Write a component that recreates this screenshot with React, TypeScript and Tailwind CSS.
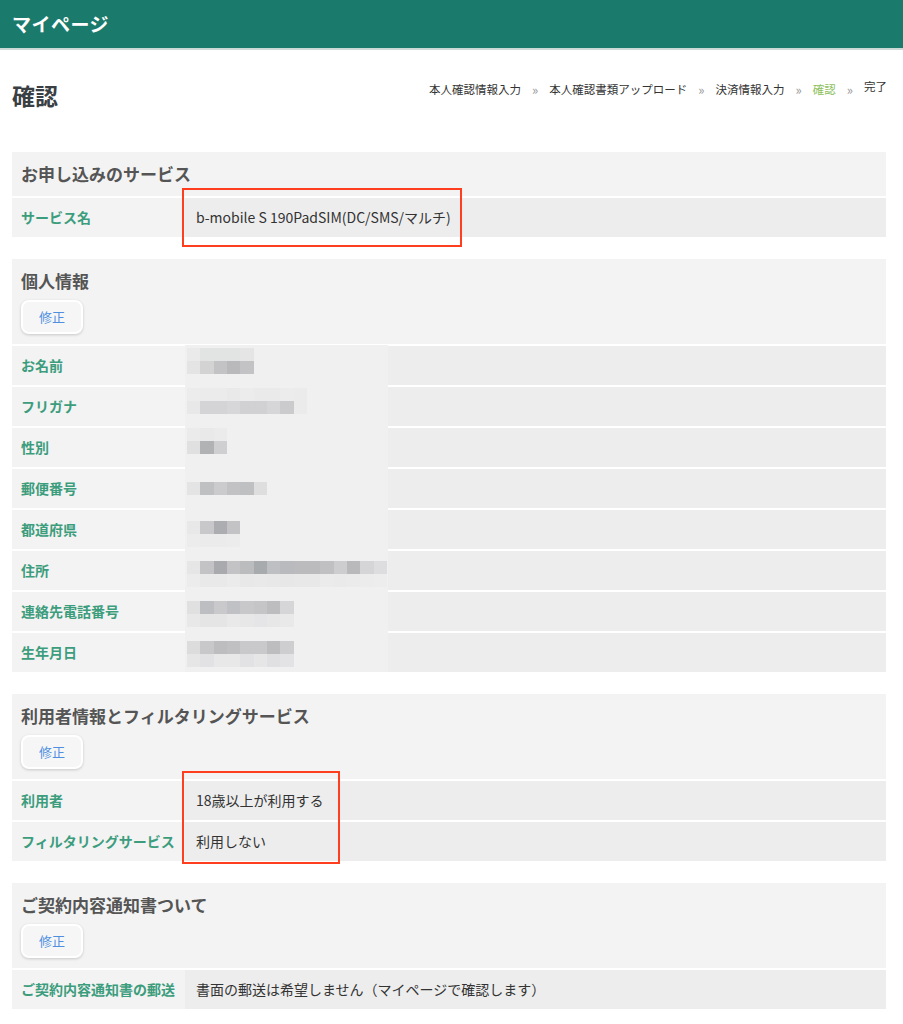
import React from "react";

const FONT = { fontFamily: '"Noto Sans CJK JP", "Noto Sans", sans-serif' };

type Row = { label: string; value?: React.ReactNode };

function FixButton() {
  return (
    <button className="mt-[7px] h-[34px] w-[62px] rounded-[8px] border-2 border-white bg-[#f6f6f6] text-[13px] text-[#4f8fe0] shadow-[0_1px_3px_rgba(0,0,0,0.18)] flex items-center justify-center">
      修正
    </button>
  );
}

function Rows({ rows }: { rows: Row[] }) {
  return (
    <div>
      {rows.map((r, i) => (
        <div key={i} className="mt-[2px] flex h-[39px]">
          <div className="w-[173px] shrink-0 bg-[#f3f3f3] pl-[9px] flex items-center text-[14px] font-bold text-[#3c9d7d] whitespace-nowrap">
            {r.label}
          </div>
          <div className="flex-1 bg-[#ededed] pl-[11px] flex items-center text-[14px] text-[#333]">
            {r.value}
          </div>
        </div>
      ))}
    </div>
  );
}

function Section({
  title,
  button,
  rows,
  children,
}: {
  title: string;
  button?: boolean;
  rows: Row[];
  children?: React.ReactNode;
}) {
  return (
    <section className="relative mt-[22px]">
      <div className="bg-[#f3f3f3] px-[9px] pt-[10px] pb-[10px] flex flex-col items-start">
        <h2 className="h-[24px] leading-[24px] text-[17px] font-bold text-[#555]">{title}</h2>
        {button && <FixButton />}
      </div>
      <Rows rows={rows} />
      {children}
    </section>
  );
}

type BlurRow = { top: number; above?: string[]; dark: string[]; below?: string[] };

const blurRows: BlurRow[] = [
  {
    top: 16,
    above: ["#eaeaea", "#e2e3e3", "#e2e3e3", "#e2e3e3", "#e5e5e5"],
    dark: ["#e4e4e4", "#d3d3d4", "#c3c3c6", "#b9b9bc", "#c3c3c6"],
  },
  {
    top: 15,
    above: ["#ececec", "#ebebeb", "#ebebeb", "#e9e9e9", "#ececec", "#eaeaea", "#eaeaea", "#ececec", "#ebebeb"],
    dark: ["#e8e8e8", "#d4d4d6", "#d4d4d6", "#d7d7d9", "#d1d1d3", "#d1d1d3", "#d6d6d8", "#cbcbcd", "#ebebeb"],
  },
  {
    top: 14,
    above: ["#ebebeb", "#e9e9e9", "#ebebeb"],
    dark: ["#e0e0e0", "#b1b2b4", "#cfcfd1"],
  },
  {
    top: 14,
    dark: ["#e4e4e4", "#bfc0c2", "#cbcbcd", "#c2c2c4", "#bfc0c2", "#dedede"],
  },
  {
    top: 13,
    dark: ["#e8e8e8", "#c8c8ca", "#acadb0", "#c3c3c5"],
    below: ["#ececec", "#ebebeb", "#ebebeb", "#ececec"],
  },
  {
    top: 12,
    dark: [
      "#e6e6e6", "#c3c3c5", "#a9aaad", "#c3c3c5", "#bbbcbe", "#a8abad", "#bdbfc2", "#b8babd",
      "#bbbbbd", "#bbbbbd", "#c0c0c2", "#cdcdd0", "#b9b9bb", "#d5d5d7", "#dddddf",
    ],
    below: [
      "#ececec", "#e9e9e9", "#e9e9e9", "#ebebeb", "#e8e8e8", "#e9e9e9", "#e8e8e8", "#e7e7e7",
      "#e8e8e8", "#e8e8e8", "#ebebeb", "#eaeaea", "#ebebeb", "#ececec", "#ededed",
    ],
  },
  {
    top: 11,
    dark: ["#e0e0e0", "#bcbec1", "#c9c9cb", "#bfc1c4", "#c8c8ca", "#c5c5c7", "#bdbdc0", "#d6d6d8"],
    below: ["#e8e8e8", "#e5e5e5", "#e5e5e5", "#e9e9e9", "#e7e7e7", "#e5e5e7", "#e7e7e7", "#e9e9e9"],
  },
  {
    top: 10,
    dark: ["#dcdcdc", "#c8c8ca", "#bdbdc0", "#c0c0c3", "#c9c9cb", "#c9c9cb", "#bdbdc0", "#ceced0"],
    below: ["#e6e6e6", "#e2e2e4", "#e8e8e8", "#e8e8e8", "#e2e2e4", "#e6e6e6", "#e0e0e2", "#e3e3e5"],
  },
];

function BlockLine({ colors }: { colors: string[] }) {
  return (
    <div className="flex h-[13px]">
      {colors.map((c, i) => (
        <div key={i} className="h-[13px] w-[13.33px]" style={{ backgroundColor: c }} />
      ))}
    </div>
  );
}

function Redaction() {
  return (
    <div className="absolute left-[173px] top-[86px] h-[327px] w-[203px] bg-[#f0f0f0] pl-[2px] flex flex-col">
      {blurRows.map((r, i) => (
        <div
          key={i}
          className="h-[41px] flex flex-col overflow-hidden"
          style={{ paddingTop: r.above ? r.top - 13 : r.top }}
        >
          {r.above && <BlockLine colors={r.above} />}
          <BlockLine colors={r.dark} />
          {r.below && <BlockLine colors={r.below} />}
        </div>
      ))}
    </div>
  );
}

function Breadcrumb() {
  const Sep = () => <span className="mx-[11px] text-[#9a9a9a] text-[13px] leading-none">»</span>;
  return (
    <nav className="flex items-center text-[11.5px] text-[#333] mt-[1px] whitespace-nowrap">
      <span>本人確認情報入力</span>
      <Sep />
      <span>本人確認書類アップロード</span>
      <Sep />
      <span>決済情報入力</span>
      <Sep />
      <span className="text-[#8cbf5c]">確認</span>
      <Sep />
      <span className="-mt-[6px]">完了</span>
    </nav>
  );
}

export default function App() {
  return (
    <div className="min-h-screen bg-white pb-[20px]" style={FONT}>
      <header className="h-[50px] bg-[#1a7a6b] border-b-2 border-[#cdd9d6] flex items-center px-[12px]">
        <h1 className="text-[19px] font-bold text-white tracking-[0.5px]">マイページ</h1>
      </header>

      <div className="flex justify-between items-start pl-[12px] pr-[16px] pt-[30px]">
        <h1 className="text-[23px] leading-[30px] font-bold text-[#3a3f44]">確認</h1>
        <Breadcrumb />
      </div>

      <main className="mx-[12px] w-[874px] pt-[20px]">
        <Section
          title="お申し込みのサービス"
          rows={[{ label: "サービス名", value: "b-mobile S 190PadSIM(DC/SMS/マルチ)" }]}
        >
          <div className="pointer-events-none absolute left-[170px] top-[36px] h-[59px] w-[280px] border-2 border-[#ff3d1f]" />
        </Section>

        <Section
          title="個人情報"
          button
          rows={[
            { label: "お名前" },
            { label: "フリガナ" },
            { label: "性別" },
            { label: "郵便番号" },
            { label: "都道府県" },
            { label: "住所" },
            { label: "連絡先電話番号" },
            { label: "生年月日" },
          ]}
        >
          <Redaction />
        </Section>

        <Section
          title="利用者情報とフィルタリングサービス"
          button
          rows={[
            { label: "利用者", value: "18歳以上が利用する" },
            { label: "フィルタリングサービス", value: "利用しない" },
          ]}
        >
          <div className="pointer-events-none absolute left-[170px] top-[77px] h-[93px] w-[158px] border-2 border-[#ff3d1f]" />
        </Section>

        <Section
          title="ご契約内容通知書ついて"
          button
          rows={[
            { label: "ご契約内容通知書の郵送", value: "書面の郵送は希望しません（マイページで確認します）" },
          ]}
        />
      </main>
    </div>
  );
}
